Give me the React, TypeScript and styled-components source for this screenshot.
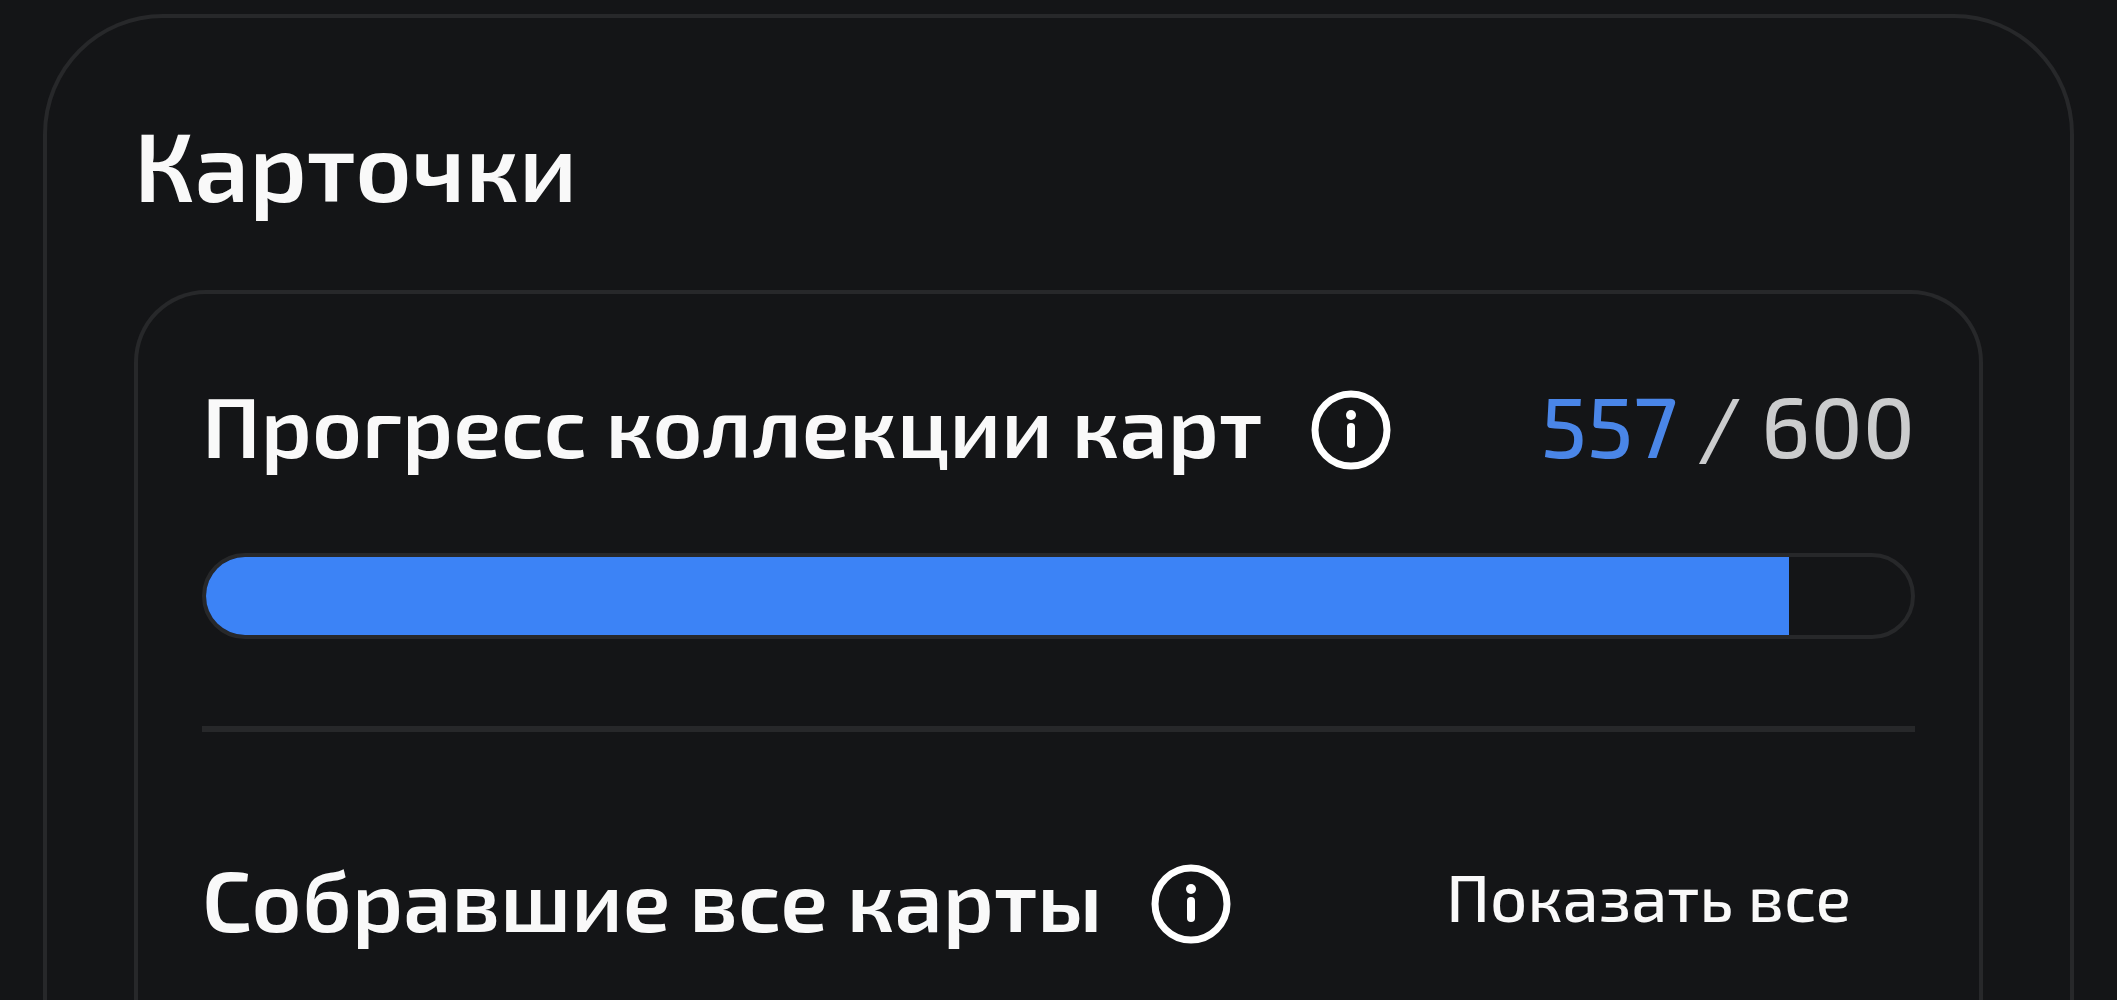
import React from "react";
import styled, { createGlobalStyle } from "styled-components";

const GlobalStyle = createGlobalStyle`
  * {
    box-sizing: border-box;
  }
  body {
    margin: 0;
    background: #141517;
    color: #f9f9f9;
    font-family: "Exo 2", Roboto, "Noto Sans", sans-serif;
  }
`;

const Page = styled.main`
  display: flex;
  flex-direction: column;
  min-height: 100vh;
  padding: 14px 43px 0;
`;

const Card = styled.section`
  flex: 1;
  display: flex;
  flex-direction: column;
  padding: 87px 87px 0;
  border: 4px solid #27282a;
  border-bottom: 0;
  border-radius: 120px 120px 0 0;
`;

const Title = styled.h1`
  margin: 0 0 69px;
  font-size: 97px;
  line-height: 116px;
  font-weight: 600;
`;

const Panel = styled.div`
  flex: 1;
  padding: 80px 64px 0;
  border: 4px solid #27282a;
  border-bottom: 0;
  border-radius: 72px 72px 0 0;
`;

const Row = styled.div`
  display: flex;
  align-items: center;
  justify-content: space-between;
  height: 112px;
`;

const Heading = styled.div`
  display: flex;
  align-items: center;
  gap: 49px;
`;

const Label = styled.h2`
  margin: 0;
  padding-bottom: 12px;
  font-size: 86px;
  line-height: 100px;
  font-weight: 600;
  white-space: nowrap;
`;

const InfoButton = styled.button`
  display: flex;
  padding: 0;
  border: 0;
  background: none;
  color: #ffffff;
  cursor: pointer;
`;

const Count = styled.p`
  margin: 0;
  padding-bottom: 12px;
  color: #cbcccd;
  font-size: 86px;
  line-height: 100px;
  font-weight: 500;
  white-space: nowrap;
`;

const Collected = styled.span`
  color: #4a86e8;
`;

const Track = styled.div`
  height: 86px;
  margin-top: 67px;
  overflow: hidden;
  border: 4px solid #27282a;
  border-radius: 43px;
`;

const Fill = styled.div`
  height: 100%;
  background: #3c83f6;
`;

const Divider = styled.hr`
  height: 6px;
  margin: 87px 0 116px;
  border: 0;
  background: #27282a;
`;

const ShowAll = styled.button`
  padding: 0 64px 16px;
  border: 0;
  background: none;
  color: #f9f9f9;
  font-family: inherit;
  font-size: 65px;
  font-weight: 500;
  line-height: 96px;
  white-space: nowrap;
  cursor: pointer;
`;

function Info({ label }: { label: string }) {
  return (
    <InfoButton type="button" aria-label={label}>
      <svg width="80" height="80" viewBox="0 0 80 80" fill="none" aria-hidden="true">
        <circle cx="40" cy="40" r="36" stroke="currentColor" strokeWidth="7" />
        <circle cx="40" cy="25" r="5" fill="currentColor" />
        <path d="M40 37v17" stroke="currentColor" strokeWidth="8" strokeLinecap="round" />
      </svg>
    </InfoButton>
  );
}

export default function App() {
  const collected = 557;
  const total = 600;
  return (
    <>
      <GlobalStyle />
      <Page>
        <Card>
          <Title>Карточки</Title>
          <Panel>
            <Row>
              <Heading>
                <Label>Прогресс коллекции карт</Label>
                <Info label="О прогрессе коллекции" />
              </Heading>
              <Count>
                <Collected>{collected}</Collected> / {total}
              </Count>
            </Row>
            <Track
              role="progressbar"
              aria-label="Прогресс коллекции карт"
              aria-valuenow={collected}
              aria-valuemin={0}
              aria-valuemax={total}
            >
              <Fill style={{ width: `${(collected / total) * 100}%` }} />
            </Track>
            <Divider />
            <Row>
              <Heading>
                <Label>Собравшие все карты</Label>
                <Info label="О собравших все карты" />
              </Heading>
              <ShowAll type="button">Показать все</ShowAll>
            </Row>
          </Panel>
        </Card>
      </Page>
    </>
  );
}
